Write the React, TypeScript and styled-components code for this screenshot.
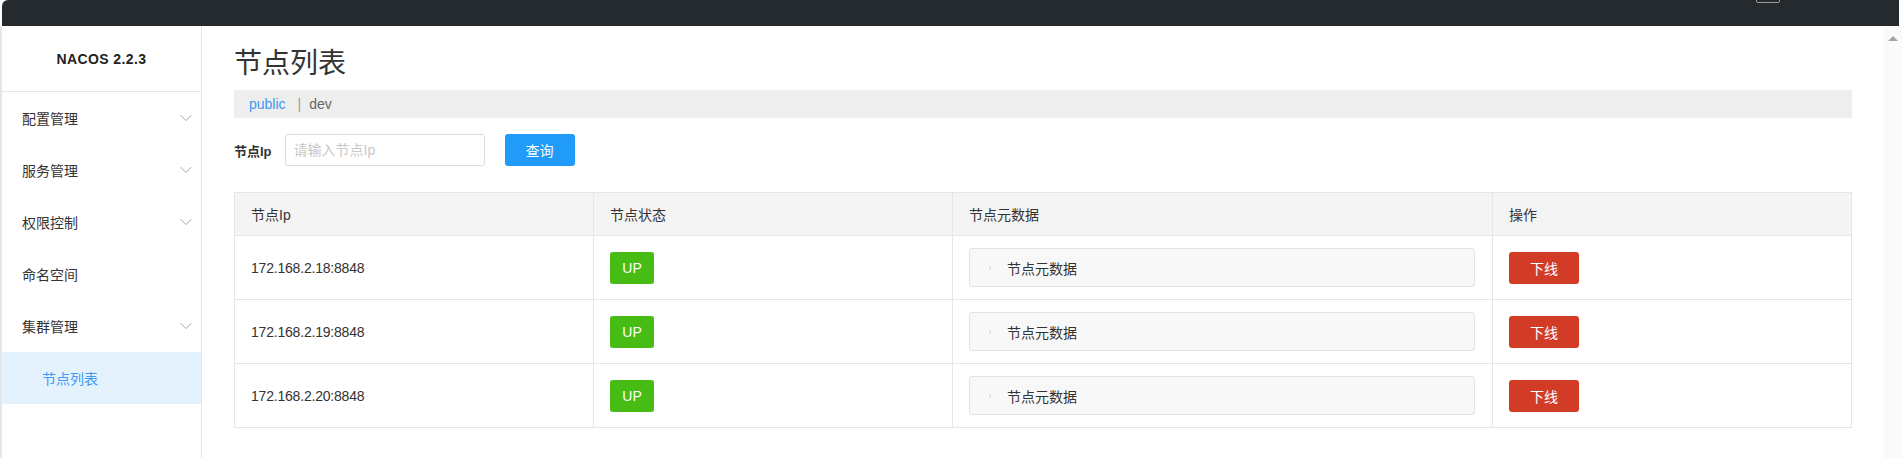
import React from "react";
import styled, { createGlobalStyle } from "styled-components";
import { ChevronDown, ChevronRight } from "lucide-react";

const GlobalStyle = createGlobalStyle`
  html, body { margin: 0; padding: 0; background: #fff; }
  body {
    font-family: "Liberation Sans", Arial, "Noto Sans CJK SC", sans-serif;
    color: #333;
    font-size: 14px;
  }
  * { box-sizing: border-box; }
`;

const Page = styled.div`
  display: flex;
  flex-direction: column;
  height: 458px;
  overflow: hidden;
`;

const TopBar = styled.div`
  height: 26px;
  margin: 0 3px 0 2px;
  background: #252a2f;
  border-top-left-radius: 6px;
  display: flex;
  justify-content: flex-end;
  padding-right: 119px;
  flex-shrink: 0;
`;

const LangBox = styled.div`
  width: 24px;
  height: 24px;
  margin-top: -21px;
  border: 1px solid #9a9a9a;
  border-radius: 2px;
`;

const Body = styled.div`
  flex: 1;
  display: flex;
  border-left: 2px solid #e6e6e6;
  min-height: 0;
`;

const Sidebar = styled.nav`
  width: 200px;
  flex-shrink: 0;
  border-right: 1px solid #e6e6e6;
  background: #fff;
  display: flex;
  flex-direction: column;
`;

const Logo = styled.div`
  height: 66px;
  display: flex;
  align-items: center;
  justify-content: center;
  font-weight: bold;
  font-size: 14px;
  letter-spacing: 0.4px;
  color: #222;
  border-bottom: 1px solid #e6e6e6;
  padding-top: 1px;
`;

const MenuItem = styled.div<{ $active?: boolean; $sub?: boolean }>`
  height: 52px;
  display: flex;
  align-items: center;
  justify-content: space-between;
  padding: 0 5px 0 ${(p) => (p.$sub ? "40px" : "20px")};
  font-size: 14px;
  color: ${(p) => (p.$active ? "#3d9bf3" : "#333")};
  background: ${(p) => (p.$active ? "#e4f2fe" : "transparent")};
`;

const Main = styled.main`
  flex: 1;
  padding: 20px 32px 0 32px;
  display: flex;
  flex-direction: column;
  min-width: 0;
`;

const Title = styled.h1`
  margin: 0;
  font-size: 28px;
  line-height: 36px;
  font-weight: normal;
  color: #333;
`;

const Breadcrumb = styled.div`
  margin-top: 8px;
  height: 28px;
  background: #eeeeee;
  display: flex;
  align-items: center;
  padding-left: 15px;
  font-size: 14px;
  color: #666;
`;

const Crumb = styled.span<{ $active?: boolean }>`
  color: ${(p) => (p.$active ? "#3e97f0" : "#666")};
`;

const Sep = styled.span`
  margin: 0 8px 0 12px;
  color: #999;
`;

const SearchRow = styled.div`
  margin-top: 16px;
  display: flex;
  align-items: center;
  height: 32px;
`;

const Label = styled.label`
  font-size: 13px;
  font-weight: bold;
  color: #333;
  margin-right: 13px;
`;

const Input = styled.input`
  width: 200px;
  height: 32px;
  border: 1px solid #dcdcdc;
  border-radius: 3px;
  padding: 0 8px;
  font-size: 14px;
  font-family: inherit;
  outline: none;
  &::placeholder { color: #c8c8c8; }
`;

const Button = styled.button<{ $color: string; $w: number }>`
  width: ${(p) => p.$w}px;
  height: 32px;
  border: none;
  border-radius: 3px;
  background: ${(p) => p.$color};
  color: #fff;
  font-size: 14px;
  font-family: inherit;
  display: flex;
  align-items: center;
  justify-content: center;
  padding: 0;
`;

const QueryButton = styled(Button)`
  margin-left: 20px;
`;

const Table = styled.table`
  margin-top: 26px;
  width: 1618px;
  border-collapse: separate;
  border-spacing: 0;
  table-layout: fixed;
  border-top: 1px solid #e6e6e6;
  border-left: 1px solid #e6e6e6;
`;

const Th = styled.th`
  height: 43px;
  background: #f4f4f4;
  border-right: 1px solid #e6e6e6;
  border-bottom: 1px solid #e6e6e6;
  text-align: left;
  font-weight: normal;
  font-size: 14px;
  color: #333;
  padding: 0 16px;
`;

const Td = styled.td`
  height: 64px;
  border-right: 1px solid #e6e6e6;
  border-bottom: 1px solid #e6e6e6;
  padding: 0 16px;
  font-size: 14px;
  color: #333;
`;

const Ip = styled.span`
  letter-spacing: -0.2px;
`;

const Collapse = styled.div`
  height: 39px;
  border: 1px solid #e3e3e3;
  border-radius: 3px;
  background: #f8f8f8;
  display: flex;
  align-items: center;
  padding-left: 16px;
  gap: 13px;
  color: #333;
  font-size: 14px;
  margin-right: 1px;
`;

const ScrollTrack = styled.div`
  width: 18px;
  flex-shrink: 0;
  background: #fafafa;
  display: flex;
  justify-content: center;
  padding-top: 10px;
`;

const ArrowUp = styled.div`
  width: 0;
  height: 0;
  border-left: 5px solid transparent;
  border-right: 5px solid transparent;
  border-bottom: 5px solid #a3a3a3;
`;

const menus = [
  { name: "配置管理", arrow: true },
  { name: "服务管理", arrow: true },
  { name: "权限控制", arrow: true },
  { name: "命名空间", arrow: false },
  { name: "集群管理", arrow: true },
];

const nodes = ["172.168.2.18:8848", "172.168.2.19:8848", "172.168.2.20:8848"];

export default function App() {
  return (
    <>
      <GlobalStyle />
      <Page>
        <TopBar>
          <LangBox />
        </TopBar>
        <Body>
          <Sidebar>
            <Logo>NACOS 2.2.3</Logo>
            {menus.map((m) => (
              <MenuItem key={m.name}>
                <span>{m.name}</span>
                {m.arrow && <ChevronDown size={20} strokeWidth={1.1} color="#999" />}
              </MenuItem>
            ))}
            <MenuItem $sub $active>
              <span>节点列表</span>
            </MenuItem>
          </Sidebar>
          <Main>
            <Title>节点列表</Title>
            <Breadcrumb>
              <Crumb $active>public</Crumb>
              <Sep>|</Sep>
              <Crumb>dev</Crumb>
            </Breadcrumb>
            <SearchRow>
              <Label>节点Ip</Label>
              <Input placeholder="请输入节点Ip" />
              <QueryButton $color="#209bfa" $w={70}>查询</QueryButton>
            </SearchRow>
            <Table>
              <colgroup>
                <col style={{ width: 359 }} />
                <col style={{ width: 359 }} />
                <col style={{ width: 540 }} />
                <col style={{ width: 359 }} />
              </colgroup>
              <thead>
                <tr>
                  <Th>节点Ip</Th>
                  <Th>节点状态</Th>
                  <Th>节点元数据</Th>
                  <Th>操作</Th>
                </tr>
              </thead>
              <tbody>
                {nodes.map((ip) => (
                  <tr key={ip}>
                    <Td><Ip>{ip}</Ip></Td>
                    <Td>
                      <Button $color="#46bc15" $w={44}>UP</Button>
                    </Td>
                    <Td>
                      <Collapse>
                        <ChevronRight size={8} strokeWidth={1.5} color="#aaa" />
                        <span>节点元数据</span>
                      </Collapse>
                    </Td>
                    <Td>
                      <Button $color="#d23c26" $w={70}>下线</Button>
                    </Td>
                  </tr>
                ))}
              </tbody>
            </Table>
          </Main>
          <ScrollTrack>
            <ArrowUp />
          </ScrollTrack>
        </Body>
      </Page>
    </>
  );
}
